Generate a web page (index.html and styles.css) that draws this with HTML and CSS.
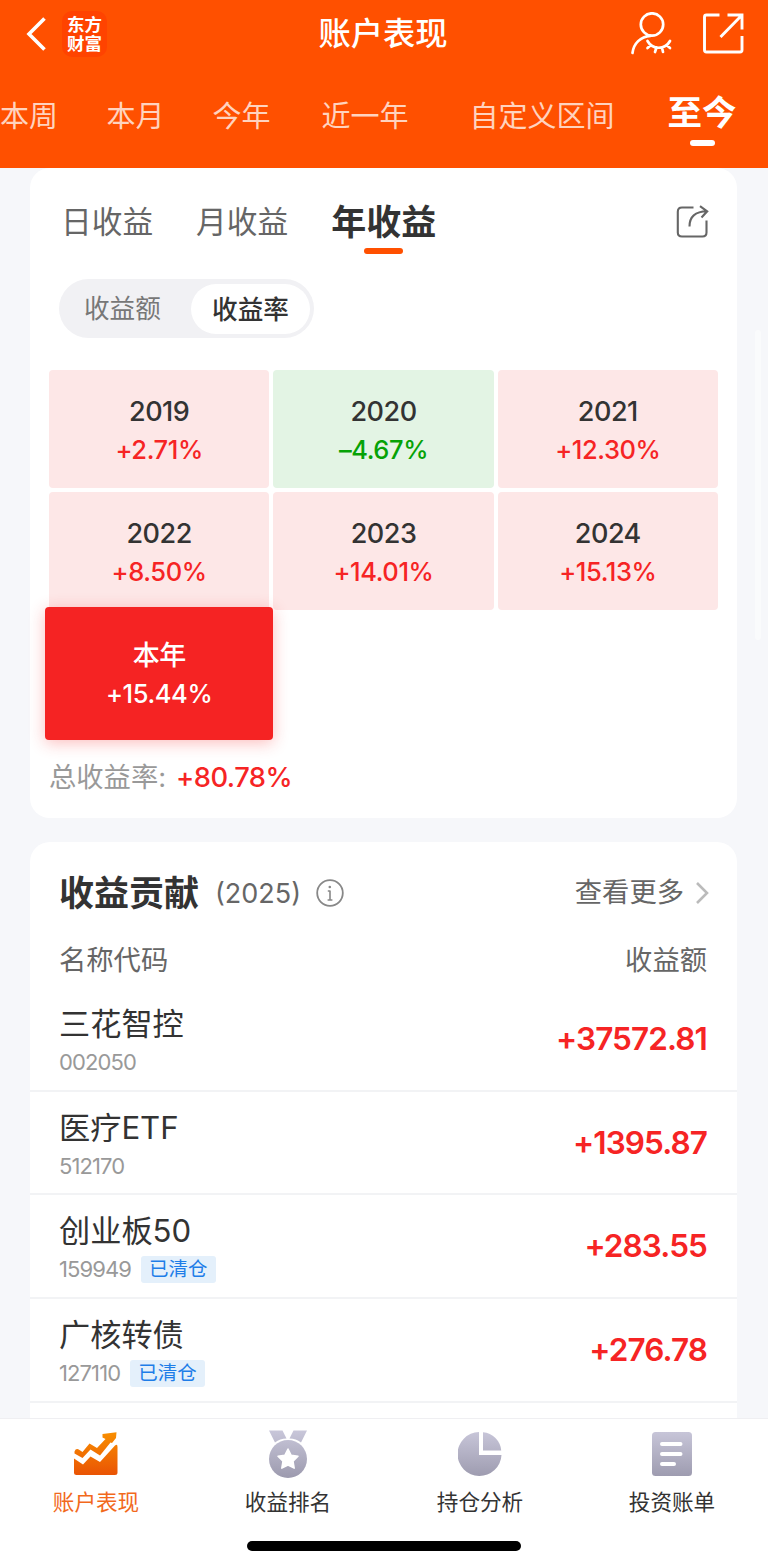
FILE: index.html
```html
<!DOCTYPE html>
<html lang="zh-CN">
<head>
<meta charset="utf-8">
<title>账户表现</title>
<link rel="stylesheet" href="styles.css">
</head>
<body>
<div class="app">
  <header class="header">
    <div class="titlebar">
      <div class="title-left">
        <svg class="back" viewBox="0 0 20 34" width="20" height="34" fill="none" stroke="#fff" stroke-width="3.6"><path d="M18.500 1.500 3 17 18.500 32.500"/></svg>
        <div class="logo"><span>东方</span><span>财富</span></div>
      </div>
      <h1 class="title">账户表现</h1>
      <div class="title-right">
        <svg viewBox="0 0 42 44" width="42" height="44" fill="none" stroke="#fff" stroke-width="2.7" stroke-linecap="round"><circle cx="21" cy="12.500" r="11.200"/><path d="M1.500 41C2.500 31.500 9.500 24.500 19.500 23.800M16.500 29C21.500 38 34 38 39 29M20 33l-3.500 3M25.500 35.500l-1.500 4.500M31 35.500l1 4.500M35.500 33l3.500 3"/></svg>
        <svg viewBox="0 0 42 42" width="42" height="42" fill="none" stroke="#fff" stroke-width="2.900"><path d="M16.500 2H3.500Q1.500 2 1.500 4V37Q1.500 39 3.500 39H37Q39 39 39 37V23M24.500 2H39V16.500M38.500 2.500 17.500 24"/></svg>
      </div>
    </div>
    <nav class="ranges">
      <span>本周</span><span class="r-month">本月</span><span class="r-year">今年</span><span class="r-last">近一年</span><span class="r-custom">自定义区间</span><span class="r-active">至今</span>
    </nav>
  </header>

  <main class="content">
    <section class="card returns">
      <div class="periods">
        <span>日收益</span><span class="p-month">月收益</span><span class="p-active">年收益</span>
        <svg class="share" viewBox="0 0 33 34" width="33" height="34" fill="none" stroke="#666" stroke-width="2.100"><path d="M17.500 2.500H6Q1.800 2.500 1.800 6.700V27.500Q1.800 31.500 6 31.500H26.500Q30.500 31.500 30.500 27.500V15.500M13.500 21.500C13.500 12 18.500 6.500 31 6.300M24 1.200 31.200 6.300 25.500 12.500"/></svg>
      </div>
      <div class="toggle"><span>收益额</span><span class="on">收益率</span></div>
      <div class="years">
        <div class="cell"><b>2019</b><i>+2.71%</i></div>
        <div class="cell down"><b>2020</b><i>–4.67%</i></div>
        <div class="cell"><b>2021</b><i>+12.30%</i></div>
        <div class="cell"><b>2022</b><i>+8.50%</i></div>
        <div class="cell"><b>2023</b><i>+14.01%</i></div>
        <div class="cell"><b>2024</b><i>+15.13%</i></div>
        <div class="cell current"><b>本年</b><i>+15.44%</i></div>
      </div>
      <p class="total">总收益率:<strong>+80.78%</strong></p>
    </section>

    <section class="card contrib">
      <div class="c-head">
        <h2>收益贡献</h2><span class="c-year">(2025)</span>
        <svg class="info" viewBox="0 0 28 28" width="28" height="28"><circle cx="14" cy="14" r="12.800" fill="none" stroke="#888" stroke-width="1.800"/><path d="M14 11.500v9.500M11.800 12h2.200M11.600 21h4.800" fill="none" stroke="#888" stroke-width="1.600"/><circle cx="13.800" cy="8" r="1.300" fill="#888"/></svg>
        <span class="more">查看更多</span>
        <svg class="chev" viewBox="0 0 14 24" width="14" height="24" fill="none" stroke="#bbb" stroke-width="2.600"><path d="M2 2 12 12 2 22"/></svg>
      </div>
      <div class="c-cols"><span>名称代码</span><span>收益额</span></div>
      <div class="row"><div><div class="name">三花智控</div><div class="code">002050</div></div><span class="amt">+37572.81</span></div>
      <div class="row"><div><div class="name">医疗ETF</div><div class="code">512170</div></div><span class="amt">+1395.87</span></div>
      <div class="row"><div><div class="name">创业板50</div><div class="code">159949<em>已清仓</em></div></div><span class="amt">+283.55</span></div>
      <div class="row"><div><div class="name">广核转债</div><div class="code">127110<em>已清仓</em></div></div><span class="amt">+276.78</span></div>
    </section>
    <div class="scrollbar"></div>
  </main>

  <footer class="tabbar">
    <svg width="0" height="0" class="defs"><defs>
      <linearGradient id="og" x1="0" y1="0" x2="0" y2="44" gradientUnits="userSpaceOnUse"><stop offset="0" stop-color="#f99200"/><stop offset="1" stop-color="#ea5504"/></linearGradient>
      <linearGradient id="gg" x1="0" y1="0" x2="0" y2="48" gradientUnits="userSpaceOnUse"><stop offset="0" stop-color="#c9c7da"/><stop offset="1" stop-color="#9c9aae"/></linearGradient>
    </defs></svg>
    <div class="tabs">
      <div class="tab active">
        <svg viewBox="0 0 44 48" width="44" height="48"><g fill="url(#og)"><path d="M0 28.500 9 34.500 16.500 26.500 26 32 41 15.500Q43.500 13.500 43.500 17V42.500Q43.500 45 41 45H2.500Q0 45 0 42.500Z"/><path d="M.5 21.500Q2 17.500 5.500 20L8.500 22 15.500 13.500 23 18 31.500 9 28.500 7.500 28.500 4 42.500 2.200 42 8 38 13 36.500 12.500 26 25.500 16.500 19.500 8.500 28 .5 23.500Z"/></g></svg>
        <span>账户表现</span>
      </div>
      <div class="tab">
        <svg viewBox="0 0 40 48" width="40" height="48"><path fill="url(#gg)" d="M1 .5H14.500L18.500 8.500Q12 8.500 7 12.500ZM39 .5H25.500L21.500 8.500Q28 8.500 33 12.500Z"/><circle cx="20" cy="29" r="19" fill="url(#gg)"/><path fill="#fff" stroke="#fff" stroke-width="1.500" stroke-linejoin="round" d="m20 19 3.200 6.300 6.800 1-5 4.900 1.200 7L20 35l-6.200 3.200 1.200-7-5-4.900 6.800-1Z"/></svg>
        <span>收益排名</span>
      </div>
      <div class="tab">
        <svg viewBox="0 0 44 48" width="44" height="48"><g fill="url(#gg)"><path d="M21 2A22 22 0 1 0 43.500 25H21Z"/><path d="M25 2.200A20 20 0 0 1 43.200 20.500H25Z"/></g></svg>
        <span>持仓分析</span>
      </div>
      <div class="tab">
        <svg viewBox="0 0 40 48" width="40" height="48"><rect y="2" width="40" height="44" rx="3.500" fill="url(#gg)"/><path d="M10 14h18.500M10 24h18.500M10 34h12" stroke="#fff" stroke-width="4" stroke-linecap="round"/></svg>
        <span>投资账单</span>
      </div>
    </div>
    <div class="home"></div>
  </footer>
</div>
</body>
</html>
```

FILE: styles.css
```css
* { box-sizing: border-box; }
body { margin: 0; font-family: Inter, "Noto Sans CJK SC", sans-serif; color: #333; background: #f6f7fa; }
h1, h2, p { margin: 0; }
i, em { font-style: normal; }
svg { display: block; flex: none; }
span { white-space: nowrap; }
.app { width: 768px; height: 1567px; display: flex; flex-direction: column; overflow: hidden; }

.header { flex: none; height: 168px; background: #ff5000; color: #fff; overflow: hidden; }
.titlebar { height: 68px; display: grid; grid-template-columns: 1fr auto 1fr; align-items: center; padding: 0 23px 0 26px; }
.title-left { display: flex; align-items: center; gap: 16px; }
.logo { width: 45px; height: 46px; border-radius: 10px; background: #ff4300; display: flex; flex-direction: column; align-items: center; justify-content: center; font-size: 17.500px; line-height: 19px; font-weight: 700; }
.title { font-size: 32.300px; line-height: 40px; font-weight: 500; margin-left: -5px; }
.title-right { display: flex; justify-content: flex-end; align-items: center; gap: 30px; }
.ranges { display: flex; height: 96px; align-items: center; font-size: 29px; line-height: 40px; font-weight: 400; color: rgba(255,255,255,.75); padding-top: 2px; }
.ranges .r-month { margin-left: 48.500px; }
.ranges .r-year { margin-left: 48px; }
.ranges .r-last { margin-left: 51px; }
.ranges .r-custom { margin-left: 61px; }
.ranges .r-active { margin-left: 53px; font-size: 34.500px; font-weight: 700; color: #fff; display: flex; flex-direction: column; align-items: center; padding-top: 5px; }
.r-active::after { content: ""; width: 25px; height: 6px; border-radius: 3px; background: #fff; margin-top: 7px; }

.content { flex: 1; min-height: 0; overflow: hidden; position: relative; padding: 0 31px 0 30px; display: flex; flex-direction: column; gap: 24px; }
.card { background: #fff; border-radius: 20px; flex: none; }
.returns { height: 650px; padding: 0 19px; }
.periods { height: 111px; padding: 0 10px 4px 12px; display: flex; align-items: center; font-size: 30.700px; line-height: 40px; color: #666; font-weight: 400; }
.periods .p-month { margin-left: 43px; }
.periods .p-active { margin-left: 43px; font-size: 35px; font-weight: 700; color: #333; display: flex; flex-direction: column; align-items: center; padding-top: 12px; }
.p-active::after { content: ""; width: 39px; height: 6px; border-radius: 3px; background: #ff5000; margin-top: 6px; }
.share { margin-left: auto; }
.periods .share { margin-right: -1px; }
.toggle { margin-left: 10px; width: 255px; height: 59px; border-radius: 30px; background: #f1f1f4; display: flex; align-items: center; padding: 0 4px 0 25px; justify-content: space-between; font-size: 25.600px; line-height: 52px; font-weight: 400; color: #777; }
.toggle .on { width: 119px; height: 50px; border-radius: 25px; background: #fff; text-align: center; font-weight: 500; color: #333; }
.years { margin-top: 32px; display: grid; grid-template-columns: repeat(3, 1fr); grid-auto-rows: 118px; gap: 4px; }
.cell { border-radius: 4px; background: #fde7e7; color: #f62424; display: flex; flex-direction: column; align-items: center; padding-top: 23px; }
.cell b { font-size: 27px; line-height: 38px; font-weight: 500; color: #333; letter-spacing: -.5px; }
.cell i { font-size: 25.500px; line-height: 37px; font-weight: 500; letter-spacing: -.4px; }
.cell.down { background: #e3f4e4; color: #06a206; }
.cell.current { margin: -7px -4px -8px; padding-top: 30px; background: #f52323; color: #fff; box-shadow: 0 3px 16px rgba(245,35,35,.3); }
.cell.current b { color: #fff; }
.total { margin-top: 26px; font-size: 27.300px; line-height: 40px; font-weight: 400; color: #999; display: flex; }
.total strong { color: #f62424; font-weight: 500; margin-left: 10px; letter-spacing: -.5px; }

.contrib { height: 640px; }
.c-head { height: 102px; padding: 0 28px 0 29px; display: flex; align-items: center; }
.c-head h2 { font-size: 35px; line-height: 40px; font-weight: 700; }
.c-year { font-size: 27px; font-weight: 400; color: #666; margin-left: 16px; }
.info { margin-left: 15px; }
.more { margin-left: auto; font-size: 27.300px; line-height: 38px; color: #666; font-weight: 400; }
.chev { margin-left: 11px; }
.c-cols { height: 44px; padding: 1px 30px 0 29px; display: flex; justify-content: space-between; align-items: flex-start; font-size: 27.300px; line-height: 32px; color: #666; font-weight: 400; }
.row { height: 103.700px; border-bottom: 2px solid #f2f3f5; padding: 15px 30px 0 29px; display: flex; justify-content: space-between; }
.name { font-size: 31.200px; line-height: 43px; }
.code { font-size: 22px; line-height: 33px; font-weight: 400; color: #999; display: flex; align-items: center; letter-spacing: -.9px; }
.code em { margin-left: 10px; height: 27px; padding: 0 8px; border-radius: 3px; background: #e4f0fb; color: #1e7de8; font-size: 19.500px; line-height: 27px; letter-spacing: 0; }
.amt { font-size: 31.500px; line-height: 72px; font-weight: 600; color: #f62424; letter-spacing: -.9px; }
.scrollbar { position: absolute; right: 7px; top: 162px; width: 6px; height: 310px; border-radius: 3px; background: #fafbfc; }

.tabbar { flex: none; height: 149px; background: #fff; border-top: 1px solid #efeff2; display: flex; flex-direction: column; align-items: center; }
.defs { position: absolute; }
.tabs { width: 768px; display: grid; grid-template-columns: repeat(4, 1fr); padding-top: 11px; }
.tab { display: flex; flex-direction: column; align-items: center; font-size: 21.600px; line-height: 30px; gap: 9px; padding-bottom: 24px; }
.tab.active { color: #f2691c; }
.home { width: 274px; height: 10px; border-radius: 5px; background: #000; }
```
